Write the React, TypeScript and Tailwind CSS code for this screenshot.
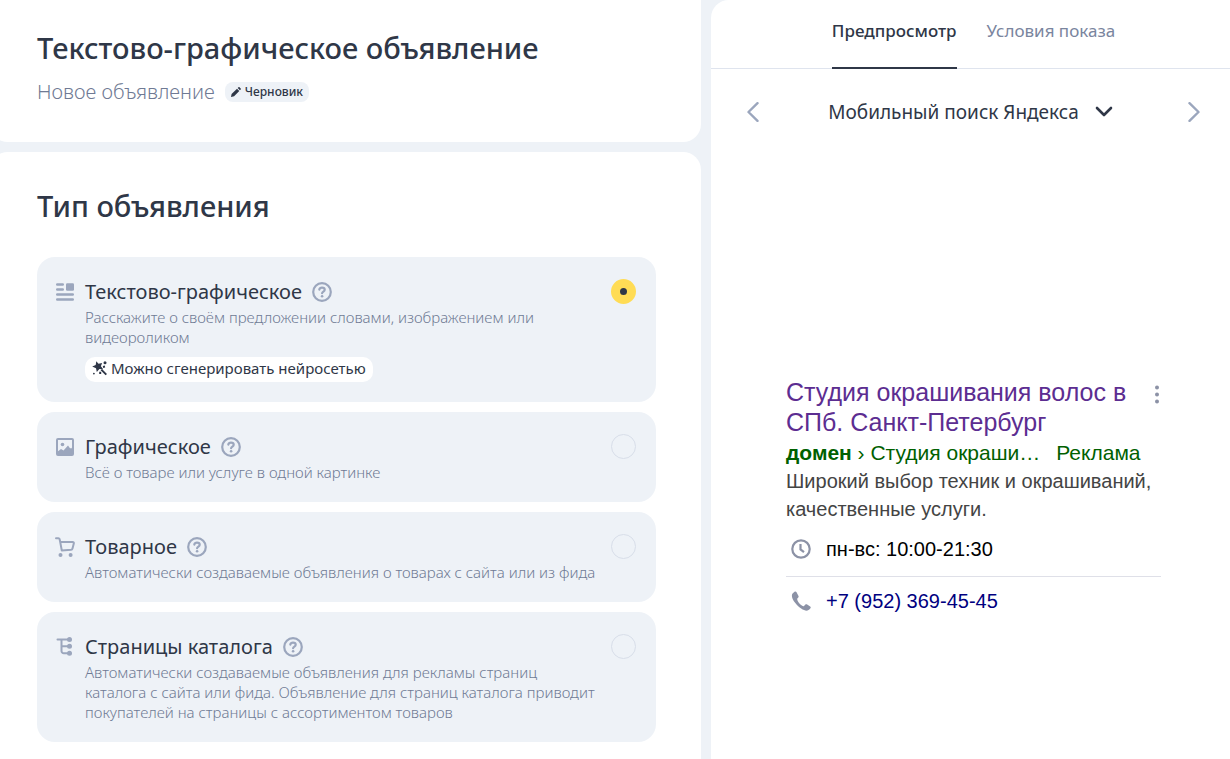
import { useState, type ReactNode } from 'react'

type AdType = 'text' | 'image' | 'product' | 'catalog'

function TextAdIcon() {
  return (
    <svg width="20" height="20" viewBox="0 0 20 20" fill="currentColor" aria-hidden="true">
      <rect x="1" y="1.2" width="8" height="2.500" rx="1.200" />
      <rect x="1" y="6.2" width="8" height="2.500" rx="1.200" />
      <rect x="11" y="1.2" width="8" height="7.500" rx="1.200" />
      <rect x="1" y="11.200" width="18" height="2.500" rx="1.200" />
      <rect x="1" y="16.200" width="18" height="2.500" rx="1.200" />
    </svg>
  )
}

function ImageAdIcon() {
  return (
    <svg width="20" height="20" viewBox="0 0 20 20" fill="currentColor" aria-hidden="true">
      <rect x="2" y="2" width="16" height="16" rx="1" fill="none" stroke="currentColor" strokeWidth="2" />
      <circle cx="7.500" cy="7.500" r="1.800" />
      <path d="M2 15 6 12l2.500 1.500L13 8.500l2.200 3 1-.8L18 13v5H2z" />
    </svg>
  )
}

function CartIcon() {
  return (
    <svg width="20" height="20" viewBox="0 0 20 20" fill="none" stroke="currentColor" strokeWidth="2" strokeLinecap="round" strokeLinejoin="round" aria-hidden="true">
      <path d="M1 1.200h2.400c.6 0 1 .3 1.200.9L5.200 5l1.600 8.500 9.200-.8c.8-.1 1.300-.5 1.500-1.300L18.800 6.600c.2-.9-.3-1.600-1.200-1.600H5.200" />
      <circle cx="5.500" cy="18" r="2" fill="currentColor" stroke="none" />
      <circle cx="15.600" cy="18" r="2" fill="currentColor" stroke="none" />
    </svg>
  )
}

function CatalogIcon() {
  return (
    <svg width="20" height="20" viewBox="0 0 20 20" fill="none" stroke="currentColor" strokeWidth="2" strokeLinecap="round" aria-hidden="true">
      <path d="M2.500 2.500h12M6.500 2.500V14a2.300 2.300 0 0 0 2.300 2.300H14M6.500 9.300H14" />
      <g fill="currentColor" stroke="none">
        <circle cx="14.500" cy="2.500" r="2.500" />
        <circle cx="14.500" cy="9.300" r="2.500" />
        <circle cx="14.500" cy="16.300" r="2.500" />
      </g>
    </svg>
  )
}

function HelpIcon() {
  return (
    <svg width="20" height="20" viewBox="0 0 20 20" fill="none" stroke="currentColor" strokeWidth="2.200" strokeLinecap="round" strokeLinejoin="round" aria-hidden="true">
      <circle cx="10" cy="10" r="8.800" />
      <path d="M7.300 7.600C7.600 6.300 8.700 5.600 10 5.600c1.600 0 2.700.8 2.700 2.100 0 1.700-2.500 1.900-2.600 3.500" />
      <circle cx="10.100" cy="14.200" r="1.300" fill="currentColor" stroke="none" />
    </svg>
  )
}

function PencilIcon() {
  return (
    <svg width="10" height="10" viewBox="0 0 10 10" fill="currentColor" aria-hidden="true">
      <path d="M0 10 .6 6.900 6 1.700 8.300 4 3.100 9.300zM6.700 1.100l.8-.8c.3-.3.7-.3 1 0l1.200 1.200c.3.3.3.7 0 1l-.8.8z" />
    </svg>
  )
}

function MagicIcon() {
  return (
    <svg width="15" height="15" viewBox="0 0 15 15" fill="currentColor" aria-hidden="true">
      <path d="M4.300.3 6.500 2.800l3.600-.8-1.200 3.300 2.300 3-3.800-.2-2.600 2.900-.8-3.800L.2 5.600l3.500-1.500z" />
      <path d="m9.300 8.600 5 5M8.200 10.700v2.200M11 5.900l2-.4" fill="none" stroke="currentColor" strokeWidth="2" />
      <circle cx="13" cy="1.800" r="1.500" />
      <circle cx="1.900" cy="12.600" r=".9" />
    </svg>
  )
}

const AD_TYPES: { key: AdType; title: string; text: string; icon: ReactNode; badge?: string }[] = [
  {
    key: 'text',
    title: 'Текстово-графическое',
    text: 'Расскажите о своём предложении словами, изображением или видеороликом',
    icon: <TextAdIcon />,
    badge: 'Можно сгенерировать нейросетью',
  },
  {
    key: 'image',
    title: 'Графическое',
    text: 'Всё о товаре или услуге в одной картинке',
    icon: <ImageAdIcon />,
  },
  {
    key: 'product',
    title: 'Товарное',
    text: 'Автоматически создаваемые объявления о товарах с сайта или из фида',
    icon: <CartIcon />,
  },
  {
    key: 'catalog',
    title: 'Страницы каталога',
    text: 'Автоматически создаваемые объявления для рекламы страниц каталога с сайта или фида. Объявление для страниц каталога приводит покупателей на страницы с ассортиментом товаров',
    icon: <CatalogIcon />,
  },
]

function AdTypePicker() {
  const [selected, setSelected] = useState<AdType>('text')

  return (
    <div role="radiogroup" aria-labelledby="ad-type-title" className="mt-[30px] flex flex-col gap-2.5">
      {AD_TYPES.map((type) => (
        <div key={type.key} className="flex items-start gap-2.5 rounded-[18px] bg-[#eef2f7] py-5 pr-5 pl-[18px]">
          <span className="flex h-[30px] w-5 shrink-0 items-center text-[#9ba6bd]">{type.icon}</span>
          <div className="min-w-0 flex-1">
            <div className="flex h-[30px] items-center gap-2.5">
              <label htmlFor={`type-${type.key}`} className="text-[20px] text-[#2f3747]">
                {type.title}
              </label>
              <button type="button" aria-label="Подсказка" className="text-[#9ba6bd]">
                <HelpIcon />
              </button>
            </div>
            <p id={`text-${type.key}`} className="text-[15px] leading-5 font-light text-[#6f7a94]">{type.text}</p>
            {type.badge && (
              <span className="mt-2.5 inline-flex h-[25px] items-center gap-1 rounded-[10px] bg-white px-[7px] pb-0.5 align-top text-[15px] text-[#2f3747]">
                <MagicIcon />
                {type.badge}
              </span>
            )}
          </div>
          <input
            type="radio"
            name="ad-type"
            id={`type-${type.key}`}
            aria-describedby={`text-${type.key}`}
            checked={selected === type.key}
            onChange={() => setSelected(type.key)}
            className="mt-0.5 size-[25px] shrink-0 appearance-none rounded-full border border-[#d8dee9] checked:border-9 checked:border-[#ffdc55] checked:bg-[#2f3747]"
          />
        </div>
      ))}
    </div>
  )
}

function SearchAd() {
  return (
    <article className="mt-[249px] mr-[69px] ml-[75px] font-['Liberation_Sans',Arial,sans-serif] text-[20px] leading-7">
      <div className="flex items-start justify-between pb-0.5">
        <h3 className="text-[25px] leading-[30px]">
          <a href="#ad" className="text-[#5c2d91]">Студия окрашивания волос в СПб. Санкт-Петербург</a>
        </h3>
        <button type="button" aria-label="Ещё" className="mt-2 text-[#8c92a6]">
          <svg width="8" height="20" viewBox="0 0 8 20" fill="currentColor" aria-hidden="true">
            <circle cx="4" cy="2.500" r="2" />
            <circle cx="4" cy="9.500" r="2" />
            <circle cx="4" cy="16.500" r="2" />
          </svg>
        </button>
      </div>
      <div className="flex gap-4 text-[21px] whitespace-nowrap text-[#006000]">
        <a href="#domain"><b>домен</b> › Студия окраши…</a>
        <span>Реклама</span>
      </div>
      <p className="text-[#444]">Широкий выбор техник и окрашиваний, качественные услуги.</p>
      <div className="flex items-center gap-[15px] border-b border-[#dfe0e8] pt-3 pb-[13px] pl-[5px] text-black">
        <svg width="20" height="20" viewBox="0 0 20 20" fill="none" stroke="#8c92a6" aria-hidden="true">
          <circle cx="10" cy="10" r="8.700" strokeWidth="2.200" />
          <path d="M9.500 5v5.400l3.500 2.700" strokeWidth="2.200" />
        </svg>
        <span>пн-вс: 10:00-21:30</span>
      </div>
      <div className="flex items-center gap-[15px] pt-2.5 pl-[5px]">
        <svg width="20" height="20" viewBox="0 0 20 20" fill="#8c92a6" aria-hidden="true">
          <path d="M3.900.6 1.800 2.300C.2 3.700.5 7.300 4.300 12c4.200 5.200 9.300 8.300 12.300 7.500 1.300-.4 2.300-1.300 3-2.500.3-.6.1-1.100-.4-1.500l-3.400-2.200c-.5-.3-1-.2-1.400.2l-1.600 1.700c-1 .1-3.400-1.500-4.800-3.300C6.500 10 6 8.300 6.300 7.400l1-1c.4-.4.4-.9.200-1.400L5.400 1C5 .4 4.400.2 3.900.6z" />
        </svg>
        <a href="tel:+79523694545" className="text-[#000080]">+7 (952) 369-45-45</a>
      </div>
    </article>
  )
}

function Preview() {
  return (
    <aside className="rounded-tl-[18px] bg-white">
      <div role="tablist" className="flex h-[69px] justify-center gap-[30px] border-b border-[#dfe4ee] pl-1.5 text-[17px]">
        <button type="button" role="tab" aria-selected="true" className="-mb-px border-b-2 border-[#2f3747] pb-1.5 font-medium text-[#2f3747]">
          Предпросмотр
        </button>
        <button type="button" role="tab" aria-selected="false" className="-mb-px border-b-2 border-transparent pb-1.5 text-[#7a859e]">
          Условия показа
        </button>
      </div>
      <div className="mt-[27px] flex h-8 items-center justify-between pr-[30px] pl-9">
        <button type="button" aria-label="Назад" className="text-[#9ba6bd]">
          <svg width="12" height="20" viewBox="0 0 12 20" fill="none" stroke="currentColor" strokeWidth="2.400" strokeLinecap="round" strokeLinejoin="round" aria-hidden="true">
            <path d="m10.500 1.200-9 8.800 9 8.800" />
          </svg>
        </button>
        <div className="relative mr-1.5 flex items-center">
          <select
            aria-label="Площадка"
            className="field-sizing-content appearance-none bg-transparent pr-[34px] text-[19px] text-[#2f3747]"
          >
            <option>Мобильный поиск Яндекса</option>
          </select>
          <svg className="pointer-events-none absolute right-0" width="18" height="12" viewBox="0 0 18 12" fill="none" stroke="#2f3747" strokeWidth="2.600" strokeLinecap="round" strokeLinejoin="round" aria-hidden="true">
            <path d="m2 2 7 7 7-7" />
          </svg>
        </div>
        <button type="button" aria-label="Вперёд" className="text-[#9ba6bd]">
          <svg width="12" height="20" viewBox="0 0 12 20" fill="none" stroke="currentColor" strokeWidth="2.400" strokeLinecap="round" strokeLinejoin="round" aria-hidden="true">
            <path d="m1.500 1.200 9 8.800-9 8.800" />
          </svg>
        </button>
      </div>
      <SearchAd />
    </aside>
  )
}

export default function App() {
  return (
    <div className="grid min-h-screen grid-cols-[minmax(0,701fr)_minmax(0,519fr)] gap-2.5 bg-[#eef2f7] font-['Noto_Sans',sans-serif]">
      <main className="-ml-2.5 flex flex-col gap-2.5">
        <header className="rounded-b-[18px] bg-white px-[47px] pt-7 pb-9">
          <h1 className="text-[29px] leading-10 font-medium text-[#2f3747]">Текстово-графическое объявление</h1>
          <div className="mt-2.5 flex items-center gap-2.5">
            <span className="text-[20px] leading-7 font-light text-[#6f7a94]">Новое объявление</span>
            <span className="inline-flex h-5 items-center gap-1 rounded-lg bg-[#eef2f7] px-1.5 text-[12px] font-medium text-[#2f3747]">
              <PencilIcon />
              Черновик
            </span>
          </div>
        </header>
        <section className="flex-1 rounded-t-[18px] bg-white pt-[34px] pr-[45px] pb-[17px] pl-[47px]">
          <h2 id="ad-type-title" className="pb-px text-[29px] leading-10 font-medium text-[#2f3747]">Тип объявления</h2>
          <AdTypePicker />
        </section>
      </main>
      <Preview />
    </div>
  )
}
